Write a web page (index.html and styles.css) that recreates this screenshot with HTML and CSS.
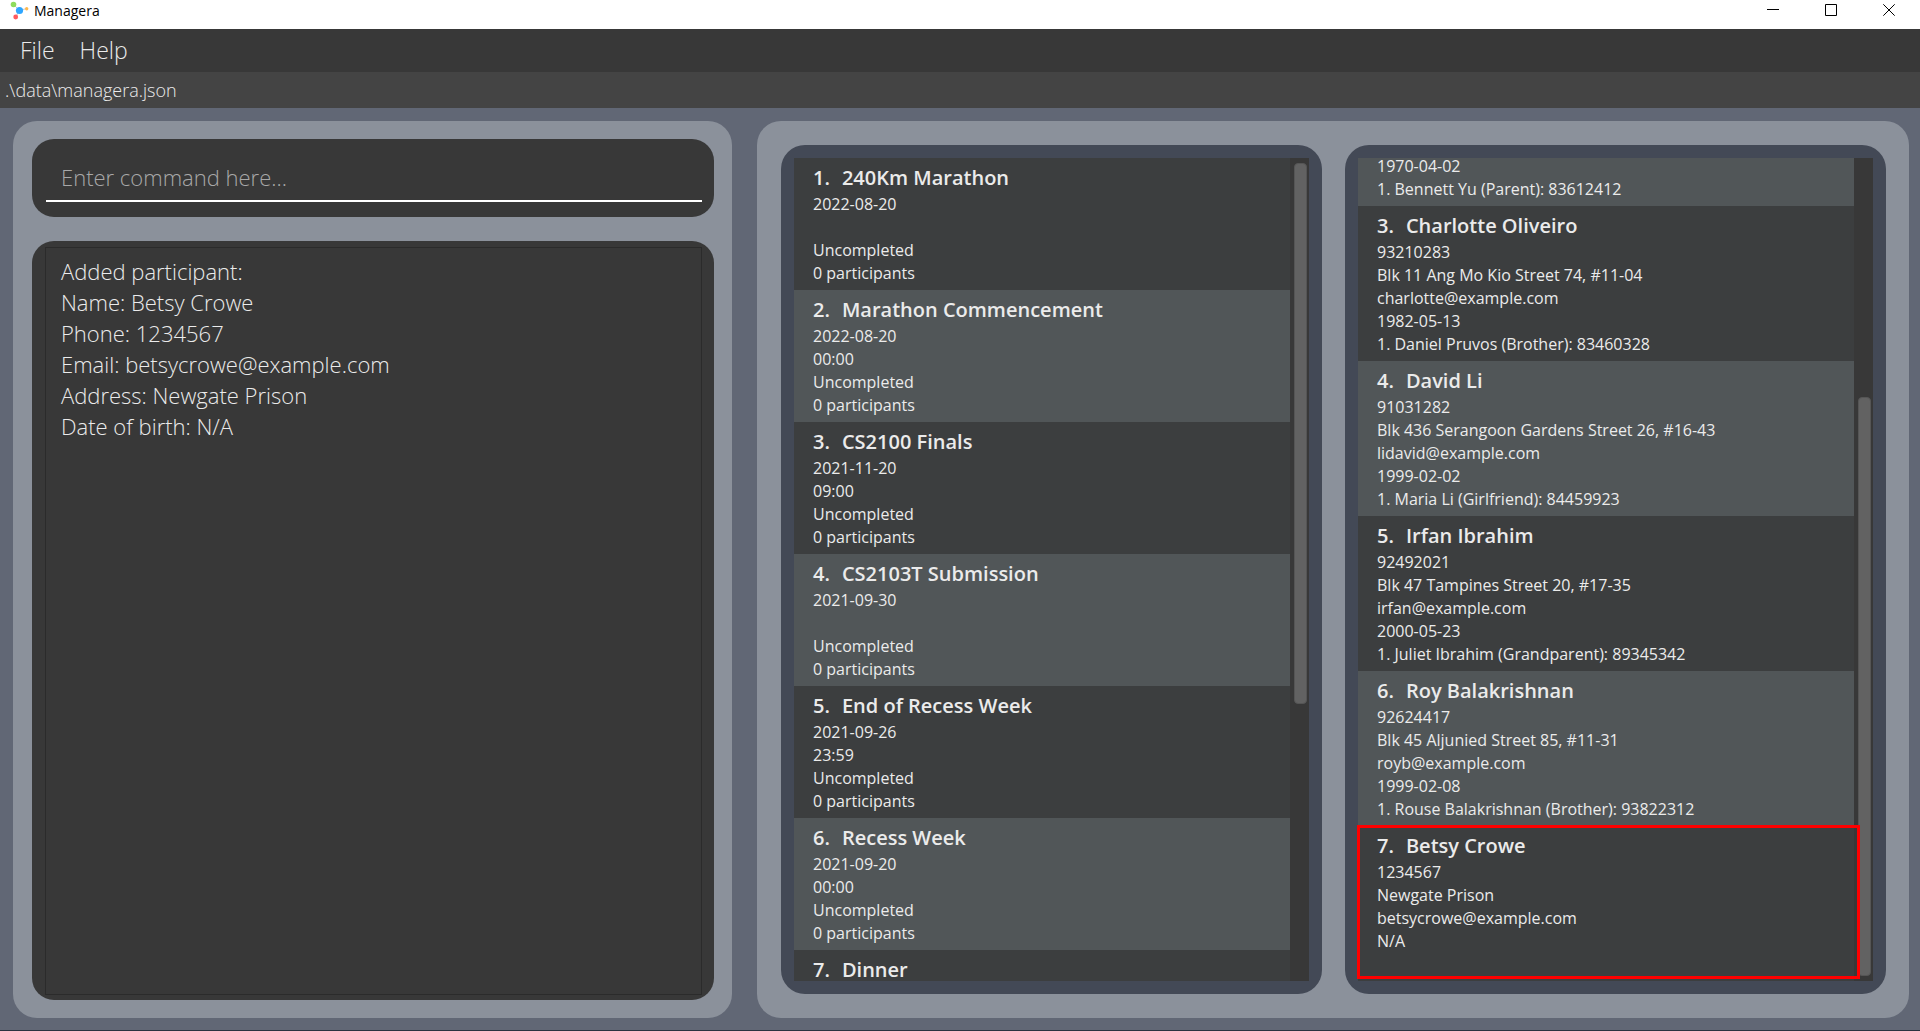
FILE: index.html
```html
<!DOCTYPE html>
<html lang="en">
<head>
<meta charset="utf-8">
<title>Managera</title>
<link rel="stylesheet" href="styles.css">
</head>
<body>
<header class="titlebar">
  <svg class="logo" width="20" height="20" viewBox="0 0 20 20" aria-hidden="true">
    <path d="M4.500 4.500L10.500 10.500L17.500 8.500M10.500 10.500L6.500 17" stroke="#b9c6d3" stroke-width="1" fill="none"/>
    <circle cx="4.500" cy="4.500" r="2.800" fill="#8fdc5c"/>
    <circle cx="10.500" cy="10.500" r="3.600" fill="#2ea6ff"/>
    <circle cx="17.700" cy="8.700" r="1.700" fill="#ffb84d"/>
    <circle cx="6.700" cy="17" r="2.400" fill="#ff5a5f"/>
  </svg>
  <h1 class="app-name">Managera</h1>
  <div class="window-controls">
    <button class="window-button" type="button" aria-label="Minimize"><svg width="12" height="12" viewBox="0 0 12 12"><path d="M0 5.500H12"/></svg></button>
    <button class="window-button" type="button" aria-label="Maximize"><svg width="12" height="12" viewBox="0 0 12 12"><path d="M.5 .5H11.500V11.500H.5Z"/></svg></button>
    <button class="window-button" type="button" aria-label="Close"><svg width="12" height="12" viewBox="0 0 12 12"><path d="M.3 .3L11.700 11.700M11.700 .3L.3 11.700"/></svg></button>
  </div>
</header>
<nav class="menubar">
  <button class="menu" type="button">File</button>
  <button class="menu" type="button">Help</button>
</nav>
<div class="pathbar">.\data\managera.json</div>
<main class="workspace">
  <section class="panel console">
    <div class="command-card">
      <input class="command" type="text" placeholder="Enter command here..." aria-label="Command">
    </div>
    <div class="result-card">
      <textarea class="result" readonly aria-label="Result">Added participant:
Name: Betsy Crowe
Phone: 1234567
Email: betsycrowe@example.com
Address: Newgate Prison
Date of birth: N/A</textarea>
    </div>
  </section>
  <section class="panel lists">
    <div class="list-frame">
      <div class="list">
        <ul class="cells">
          <li class="cell"><h2>1.<span>240Km Marathon</span></h2><p>2022-08-20</p><p></p><p>Uncompleted</p><p>0 participants</p></li>
          <li class="cell"><h2>2.<span>Marathon Commencement</span></h2><p>2022-08-20</p><p>00:00</p><p>Uncompleted</p><p>0 participants</p></li>
          <li class="cell"><h2>3.<span>CS2100 Finals</span></h2><p>2021-11-20</p><p>09:00</p><p>Uncompleted</p><p>0 participants</p></li>
          <li class="cell"><h2>4.<span>CS2103T Submission</span></h2><p>2021-09-30</p><p></p><p>Uncompleted</p><p>0 participants</p></li>
          <li class="cell"><h2>5.<span>End of Recess Week</span></h2><p>2021-09-26</p><p>23:59</p><p>Uncompleted</p><p>0 participants</p></li>
          <li class="cell"><h2>6.<span>Recess Week</span></h2><p>2021-09-20</p><p>00:00</p><p>Uncompleted</p><p>0 participants</p></li>
          <li class="cell"><h2>7.<span>Dinner</span></h2></li>
        </ul>
        <div class="track"><div class="thumb" style="height:66.5%"></div></div>
      </div>
    </div>
    <div class="list-frame">
      <div class="list">
        <ul class="cells scrolled-to-end">
          <li class="cell"><p>1970-04-02</p><p>1. Bennett Yu (Parent): 83612412</p></li>
          <li class="cell"><h2>3.<span>Charlotte Oliveiro</span></h2><p>93210283</p><p>Blk 11 Ang Mo Kio Street 74, #11-04</p><p>charlotte@example.com</p><p>1982-05-13</p><p>1. Daniel Pruvos (Brother): 83460328</p></li>
          <li class="cell"><h2>4.<span>David Li</span></h2><p>91031282</p><p>Blk 436 Serangoon Gardens Street 26, #16-43</p><p>lidavid@example.com</p><p>1999-02-02</p><p>1. Maria Li (Girlfriend): 84459923</p></li>
          <li class="cell"><h2>5.<span>Irfan Ibrahim</span></h2><p>92492021</p><p>Blk 47 Tampines Street 20, #17-35</p><p>irfan@example.com</p><p>2000-05-23</p><p>1. Juliet Ibrahim (Grandparent): 89345342</p></li>
          <li class="cell"><h2>6.<span>Roy Balakrishnan</span></h2><p>92624417</p><p>Blk 45 Aljunied Street 85, #11-31</p><p>royb@example.com</p><p>1999-02-08</p><p>1. Rouse Balakrishnan (Brother): 93822312</p></li>
          <li class="cell"><h2>7.<span>Betsy Crowe</span></h2><p>1234567</p><p>Newgate Prison</p><p>betsycrowe@example.com</p><p>N/A</p><p></p></li>
        </ul>
        <div class="track at-end"><div class="thumb" style="height:71.2%"></div></div>
        <div class="highlight"></div>
      </div>
    </div>
  </section>
</main>
</body>
</html>
```
FILE: styles.css
```css
* { box-sizing: border-box; }

body {
  margin: 0;
  height: 100vh;
  display: flex;
  flex-direction: column;
  overflow: hidden;
  background: #616775;
  border-bottom: 1px solid #2b3440;
  font-family: "Open Sans", "Noto Sans", sans-serif;
  color: #ebebeb;
}

h1, h2, p, ul { margin: 0; padding: 0; }

button { border: 0; background: none; font: inherit; color: inherit; }

.titlebar {
  flex: none;
  display: flex;
  height: 29px;
  padding: 0 2px 0 9px;
  background: #fff;
  color: #000;
}

.app-name {
  margin-left: 5px;
  font-size: 14px;
  font-weight: 400;
  line-height: 22px;
}

.window-controls { display: flex; margin-left: auto; }

.window-button {
  display: flex;
  justify-content: center;
  width: 58px;
  padding: 4px 0 0;
}

.window-button svg { fill: none; stroke: #000; stroke-width: 1; }

.menubar {
  flex: none;
  display: flex;
  align-items: flex-start;
  gap: 1px;
  height: 43px;
  padding-left: 8px;
  background: #383838;
  font-size: 23px;
  font-weight: 300;
}

.menu { padding: 0 12px; line-height: 42px; }

.pathbar {
  flex: none;
  height: 36px;
  padding-left: 5px;
  background: #444;
  font-size: 18px;
  font-weight: 300;
  line-height: 36px;
}

.workspace {
  flex: 1;
  min-height: 0;
  display: grid;
  grid-template-columns: minmax(0, 719fr) minmax(0, 1152fr);
  gap: 25px;
  padding: 13px 11px 12px 13px;
}

.panel { min-height: 0; border-radius: 24px; background: #8b919b; }

.console {
  display: flex;
  flex-direction: column;
  gap: 24px;
  padding: 18px 18px 18px 19px;
}

.command-card, .result-card { border-radius: 22px; background: #383838; }

.command-card { padding: 15px 12px 15px 14px; height: 78px; }

.command {
  width: 100%;
  height: 48px;
  padding: 0 15px;
  border: 0;
  border-bottom: 2px solid #fff;
  outline: 0;
  background: none;
  color: #fff;
  font: 300 22px "Open Sans", sans-serif;
}

.command::placeholder { color: #a8a8a8; opacity: 1; }

.result-card { flex: 1; min-height: 0; padding: 6px 12px 5px 13px; }

.result {
  display: block;
  width: 100%;
  height: 100%;
  padding: 8px 15px;
  border: 1px solid #2b2b2b;
  outline: 0;
  resize: none;
  background: none;
  color: #ebebeb;
  font: 300 22px/31px "Open Sans", sans-serif;
}

.lists {
  display: grid;
  grid-template-columns: repeat(2, minmax(0, 1fr));
  grid-template-rows: minmax(0, 1fr);
  gap: 23px;
  padding: 24px 23px 24px 24px;
}

.list-frame { padding: 13px; border-radius: 24px; background: #434956; }

.list { position: relative; display: flex; height: 100%; }

.cells {
  flex: 1;
  min-width: 0;
  display: flex;
  flex-direction: column;
  overflow: hidden;
  list-style: none;
  background: #3c3e3f;
}

.scrolled-to-end { justify-content: flex-end; }

.cell { flex: none; padding: 6px 19px 5px; background: #3c3e3f; }

.cell:nth-child(even) { background: #515658; }

.scrolled-to-end .cell:nth-child(odd) { background: #515658; }

.scrolled-to-end .cell:nth-child(even) { background: #3c3e3f; }

.cell h2 { margin-bottom: 1px; font-size: 20px; font-weight: 600; line-height: 28px; }

.cell h2 span { margin-left: 12px; }

.cell p { height: 23px; font-size: 16px; line-height: 23px; white-space: nowrap; }

.track {
  display: flex;
  flex-direction: column;
  width: 19px;
  padding: 5px 2px 5px 4px;
  background: #383838;
}

.at-end { justify-content: flex-end; }

.thumb { border: 1px solid #555; border-radius: 4px; background: #626262; }

/* Outline round the newly added participant */
.highlight {
  position: absolute;
  right: 13px;
  bottom: 2px;
  left: -1px;
  height: 154px;
  border: 3px solid #f00;
}
```
